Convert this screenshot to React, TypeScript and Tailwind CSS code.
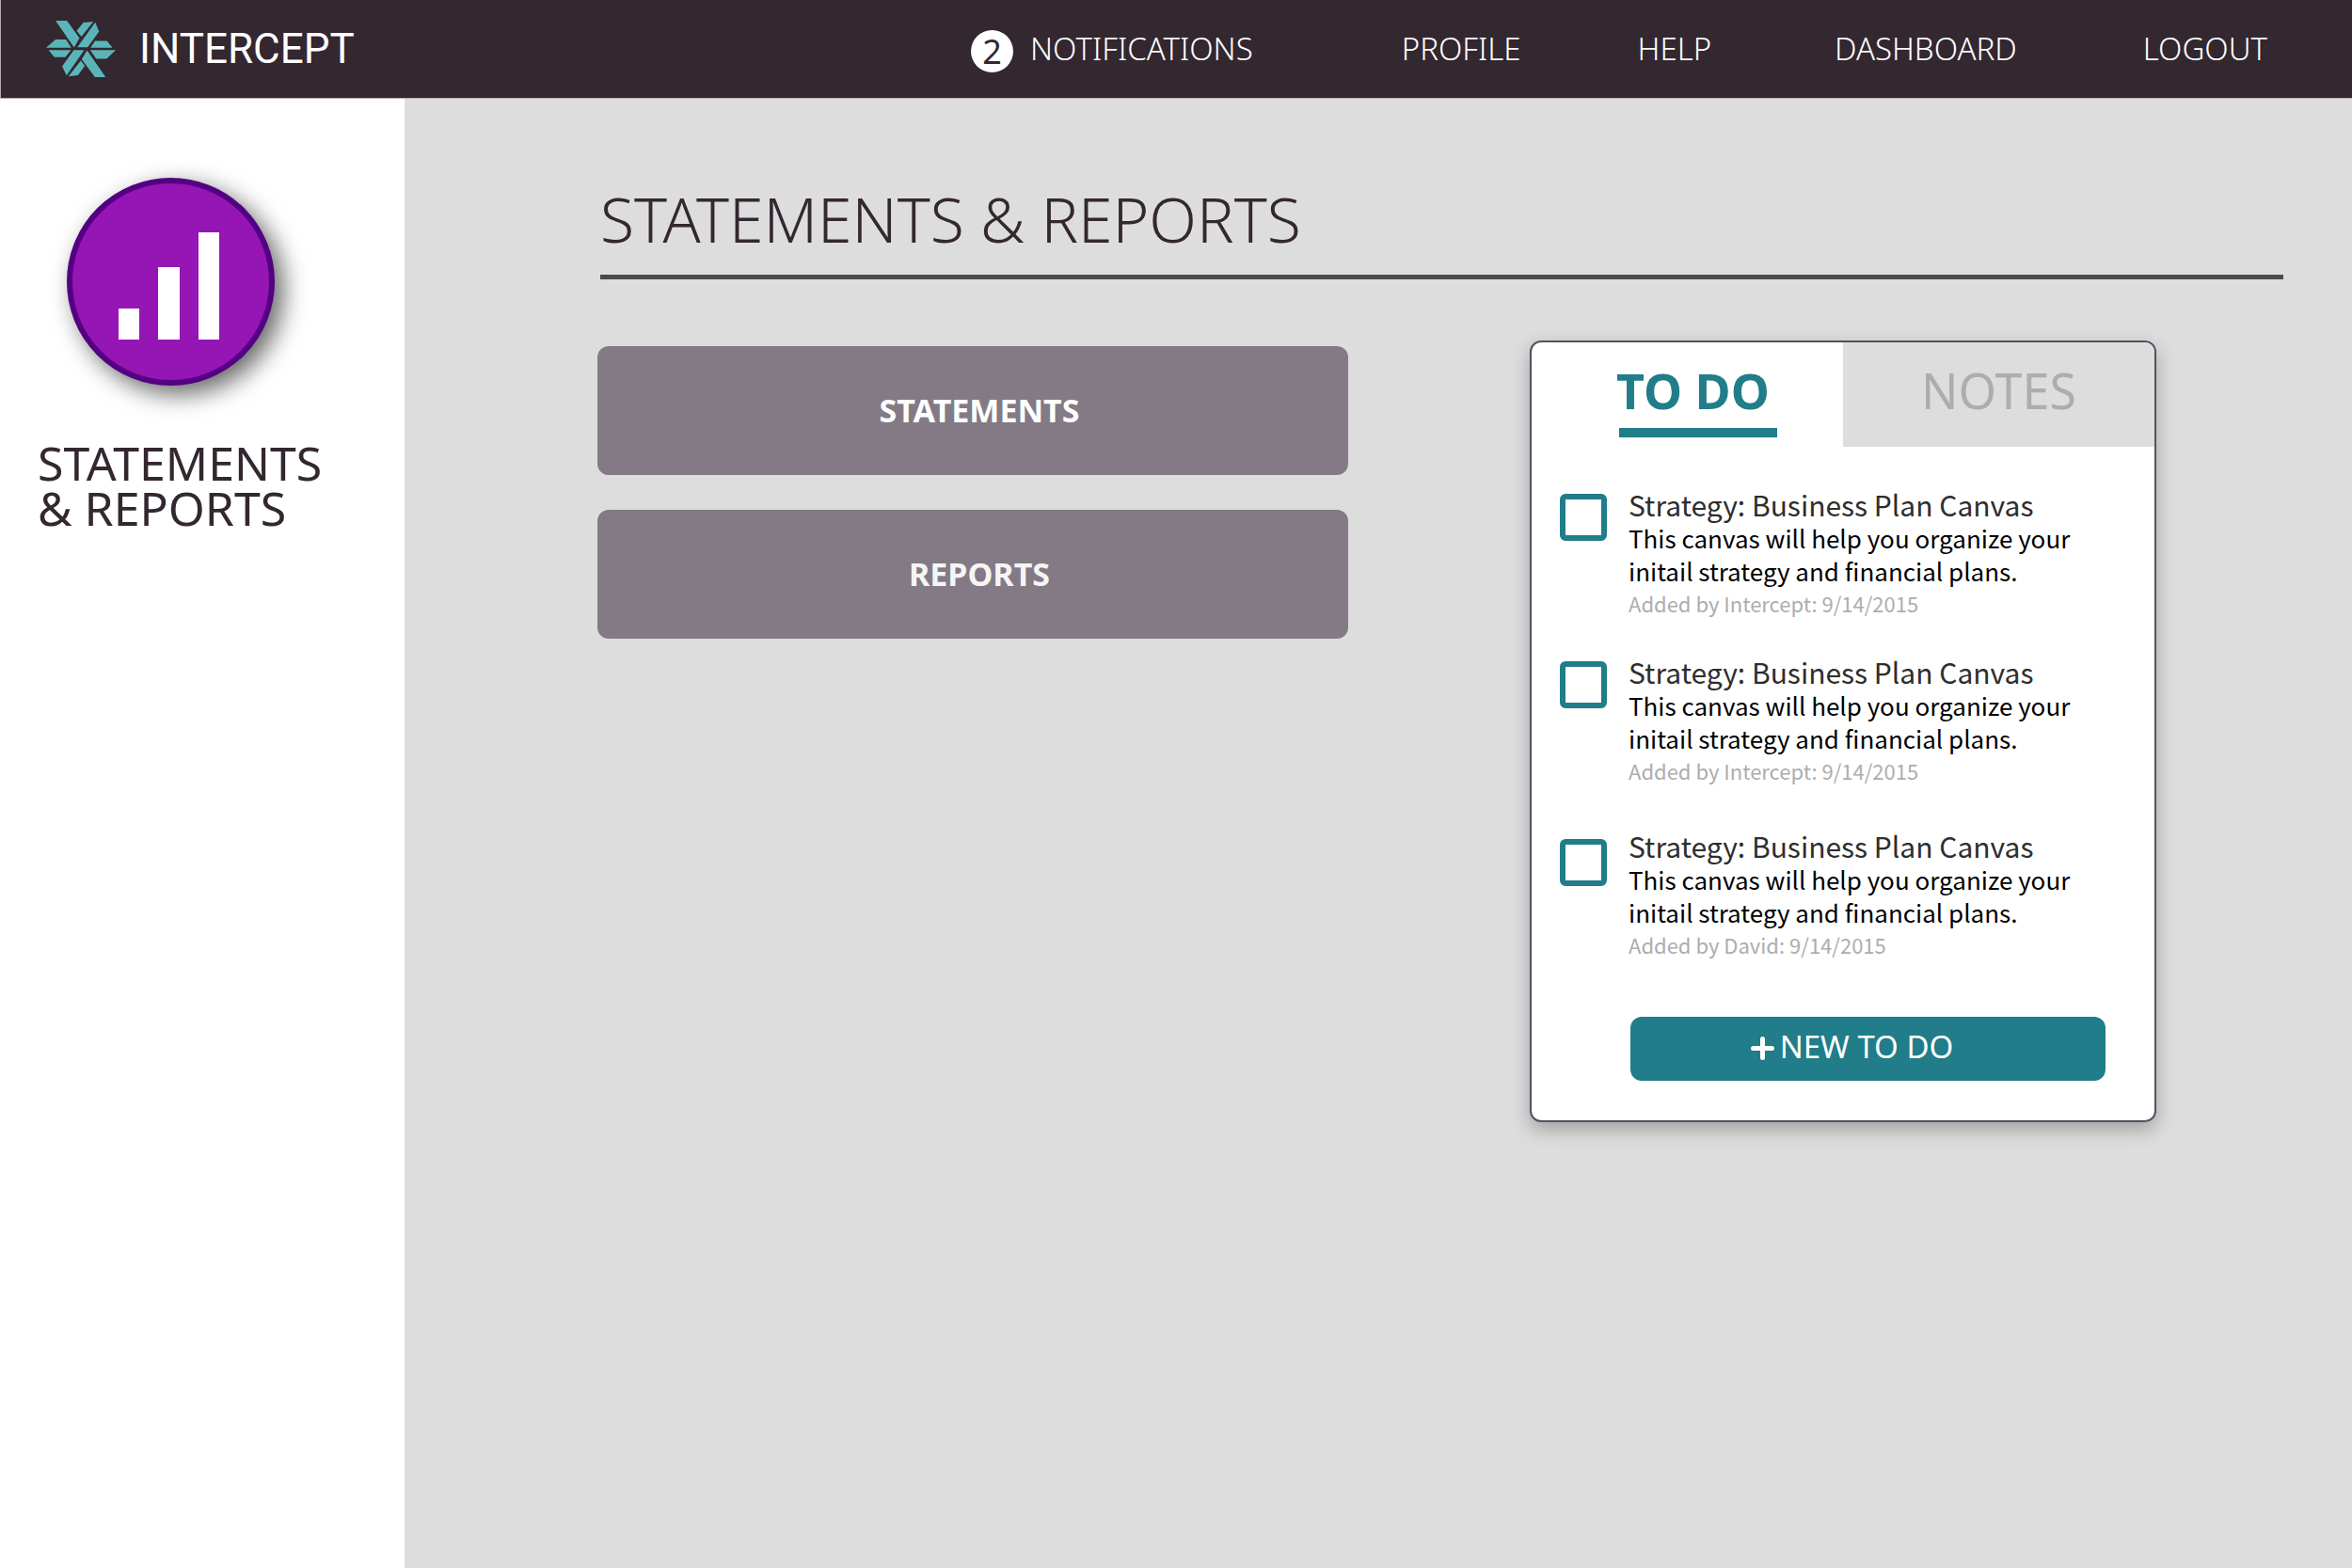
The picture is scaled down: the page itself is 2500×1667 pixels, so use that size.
import { useState } from 'react';

const navItems = [
  { label: 'PROFILE', gap: 'ml-[158px]' },
  { label: 'HELP', gap: 'ml-[124px]' },
  { label: 'DASHBOARD', gap: 'ml-[131px]' },
  { label: 'LOGOUT', gap: 'ml-[134px]' },
];

const todos = [
  { id: 'todo-1', by: 'Intercept', box: 'mt-1.5', row: '' },
  { id: 'todo-2', by: 'Intercept', box: 'mt-1.5', row: 'mt-[38px]' },
  { id: 'todo-3', by: 'David', box: 'mt-2.5', row: 'mt-[45px]' },
];

function Logo() {
  return (
    <svg viewBox="27 33 221 179" className="h-[60px] w-[74px]" fill="#5bb5b8" aria-hidden="true">
      <polygon points="57,33 93,33 133,88 116,118" />
      <polygon points="145,39 177,36 139,84 124,65" />
      <polygon points="183,38 195,67 159,117 126,117" />
      <polygon points="182,97 220,97 238,119 168,119" />
      <polygon points="167,126 248,126 219,154 186,154" />
      <polygon points="27,119 57,93 90,93 107,119" />
      <polygon points="35,126 106,126 88,149 53,149" />
      <polygon points="115,126 148,126 92,207 78,178" />
      <polygon points="137,160 150,176 128,206 98,210" />
      <polygon points="157,127 216,212 182,212 140,155" />
    </svg>
  );
}

function Header() {
  return (
    <header className="flex h-[105px] items-center border-b border-l border-[#b3abb3] bg-[#332730] pr-[90px] pl-12 text-white">
      <a href="#home" className="flex items-center">
        <Logo />
        <span className="ml-[25px] font-['Roboto',sans-serif] text-[44px] leading-[52px]">INTERCEPT</span>
      </a>
      <nav className="ml-auto flex items-center text-[33px] leading-[44px] font-light whitespace-nowrap">
        <a href="#notifications" className="flex items-center">
          <span className="mt-1 mr-[18px] flex size-[45px] items-center justify-center rounded-full bg-white text-[36px] leading-[45px] font-normal text-[#332730]">
            2
          </span>
          NOTIFICATIONS
        </a>
        {navItems.map((n) => (
          <a key={n.label} href={`#${n.label.toLowerCase()}`} className={n.gap}>
            {n.label}
          </a>
        ))}
      </nav>
    </header>
  );
}

function Sidebar() {
  return (
    <aside className="w-[430px] shrink-0 bg-white pt-[84px]">
      <div className="ml-[71px] flex size-[221px] rounded-full border-[6px] border-[#530083] bg-[#9516b4] shadow-[9px_9px_26px_rgba(0,0,0,0.6)]">
        <svg viewBox="0 0 209 209" className="size-full" fill="#fff" aria-hidden="true">
          <rect x="49" y="133" width="22" height="33" />
          <rect x="91" y="89" width="23" height="77" />
          <rect x="134" y="52" width="22" height="114" />
        </svg>
      </div>
      <p className="mt-[58px] pl-10 text-[50px] leading-[48px] text-[#332730]">
        STATEMENTS
        <br />
        &amp; REPORTS
      </p>
    </aside>
  );
}

function TodoCard() {
  const [tab, setTab] = useState('todo');
  return (
    <section className="shrink grow-[662] basis-0 overflow-hidden rounded-xl border-2 border-[#5b4d61] bg-white pb-[42px] shadow-[0_8px_20px_rgba(0,0,0,0.27)]">
      <div role="tablist" className="grid grid-cols-2">
        <button
          role="tab"
          aria-selected={tab === 'todo'}
          onClick={() => setTab('todo')}
          className="flex h-[111px] justify-center pt-[21px] pl-5"
        >
          <span className="flex w-[171px] flex-col text-left">
            <span className="text-[52px] leading-[60px] font-bold text-[#207d89]">TO DO</span>
            <span className="mt-[10px] ml-[3px] h-[10px] bg-[#207d89]" />
          </span>
        </button>
        <button
          role="tab"
          aria-selected={tab === 'notes'}
          onClick={() => setTab('notes')}
          className="flex h-[111px] justify-center bg-[#ddd] pt-[21px] text-[52px] leading-[60px] text-[#adadad]"
        >
          NOTES
        </button>
      </div>
      <ul className="pt-11 pl-[30px] font-['Noto_Sans_CJK_SC',sans-serif]">
        {todos.map((t) => (
          <li key={t.id} className={`flex ${t.row}`}>
            <input
              id={t.id}
              type="checkbox"
              className={`size-[50px] shrink-0 appearance-none rounded-md border-[6px] border-[#207d89] checked:bg-[#207d89] ${t.box}`}
            />
            <div className="ml-[23px] leading-[35px]">
              <label htmlFor={t.id} className="block text-[30px] leading-[35px] text-[#2e2e2e]">
                Strategy: Business Plan Canvas
              </label>
              <p className="text-[26px] leading-[35px] text-black">
                This canvas will help you organize your
                <br />
                initail strategy and financial plans.
              </p>
              <p className="text-[22px] leading-[35px] text-[#adadad]">Added by {t.by}: 9/14/2015</p>
            </div>
          </li>
        ))}
      </ul>
      <div className="mt-[59px] mr-[52px] ml-[105px]">
        <button className="flex h-[68px] w-full items-center justify-center rounded-xl bg-[#207d89] pr-[34px] pb-1 text-[33px] leading-[44px] text-white">
          <svg viewBox="0 0 25 25" className="mt-0.5 mr-1.5 size-[25px]" stroke="#fff" strokeWidth="5" strokeLinecap="round" aria-hidden="true">
            <path d="M2.5 12.5h20M12.5 2.5v20" />
          </svg>
          NEW TO DO
        </button>
      </div>
    </section>
  );
}

export default function App() {
  return (
    <div className="flex min-h-screen flex-col bg-[#ddd] font-['Noto_Sans',sans-serif]">
      <Header />
      <div className="flex grow">
        <Sidebar />
        <main className="grow pt-[87px] pr-[73px] pl-[205px]">
          <h1 className="ml-[3px] border-b-[5px] border-[#4a4a4a] pb-5 text-[66px] leading-[80px] font-[350] text-[#332730]">
            STATEMENTS &amp; REPORTS
          </h1>
          <div className="mt-[65px] flex items-start gap-[193px] pr-[135px]">
            <div className="flex shrink grow-[798] basis-0 flex-col gap-[37px] pt-1.5">
              <button className="h-[137px] rounded-xl bg-[#837a85] pl-[14px] text-[34px] font-bold text-white">
                STATEMENTS
              </button>
              <button className="h-[137px] rounded-xl bg-[#837a85] pl-[14px] text-[34px] font-bold text-[#f5f5f5]">
                REPORTS
              </button>
            </div>
            <TodoCard />
          </div>
        </main>
      </div>
    </div>
  );
}
